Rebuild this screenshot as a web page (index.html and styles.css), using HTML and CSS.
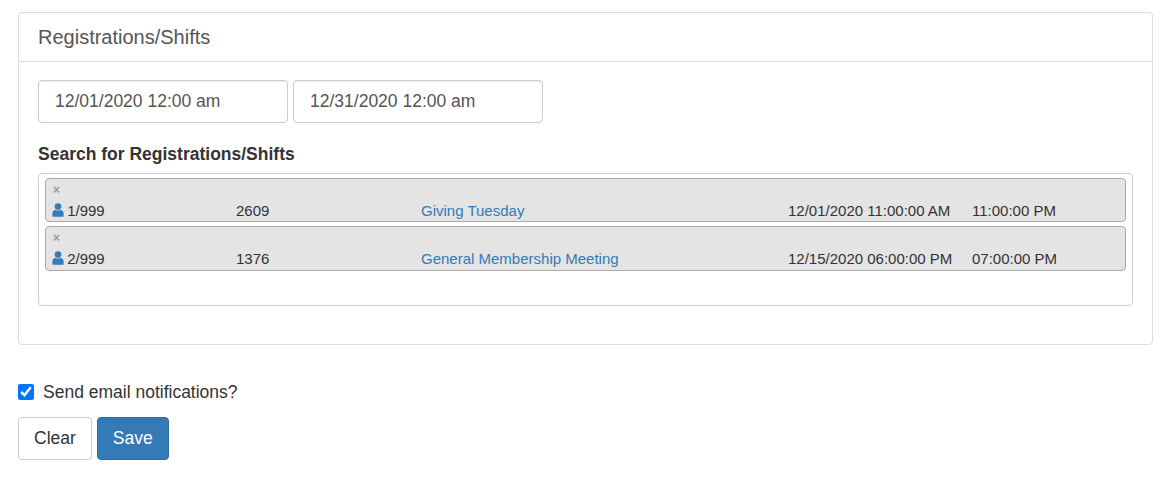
FILE: index.html
```html
<!DOCTYPE html>
<html lang="en">
<head>
    <meta charset="UTF-8">
    <title>Registrations/Shifts</title>
    <link rel="stylesheet" href="styles.css">
</head>
<body>
    <div class="panel">
        <div class="panel-heading">Registrations/Shifts</div>
        <div class="panel-body">
            <div class="date-range">
                <input class="form-control" type="text" value="12/01/2020 12:00 am">
                <input class="form-control" type="text" value="12/31/2020 12:00 am">
            </div>
            <label class="search-label">Search for Registrations/Shifts</label>
            <div class="select-box">
                <div class="choice">
                    <span class="choice-remove">×</span>
                    <div class="choice-row">
                        <span class="col-count">
                            <svg class="user-icon" viewBox="0 0 12 14"><circle cx="6" cy="3.6" r="3.3"/><path d="M0.4 13.2V10.4C0.4 8.2 2 7 3.6 6.7C4.2 7.3 5 7.6 6 7.6C7 7.6 7.8 7.3 8.4 6.7C10 7 11.6 8.2 11.6 10.4V13.2C11.6 13.6 11.3 13.8 11 13.8H1C0.7 13.8 0.4 13.6 0.4 13.2Z"/></svg>
                            1/999
                        </span>
                        <span class="col-id">2609</span>
                        <a class="col-name" href="#">Giving Tuesday</a>
                        <span class="col-start">12/01/2020 11:00:00 AM</span>
                        <span>11:00:00 PM</span>
                    </div>
                </div>
                <div class="choice">
                    <span class="choice-remove">×</span>
                    <div class="choice-row">
                        <span class="col-count">
                            <svg class="user-icon" viewBox="0 0 12 14"><circle cx="6" cy="3.6" r="3.3"/><path d="M0.4 13.2V10.4C0.4 8.2 2 7 3.6 6.7C4.2 7.3 5 7.6 6 7.6C7 7.6 7.8 7.3 8.4 6.7C10 7 11.6 8.2 11.6 10.4V13.2C11.6 13.6 11.3 13.8 11 13.8H1C0.7 13.8 0.4 13.6 0.4 13.2Z"/></svg>
                            2/999
                        </span>
                        <span class="col-id">1376</span>
                        <a class="col-name" href="#">General Membership Meeting</a>
                        <span class="col-start">12/15/2020 06:00:00 PM</span>
                        <span>07:00:00 PM</span>
                    </div>
                </div>
            </div>
        </div>
    </div>

    <label class="notify">
        <input type="checkbox" checked>
        Send email notifications?
    </label>

    <div class="actions">
        <button class="btn" type="button">Clear</button>
        <button class="btn btn-primary" type="button">Save</button>
    </div>
</body>
</html>
```

FILE: styles.css
```css
body {
    font-family: "Liberation Sans", Arial, sans-serif;
    font-size: 17.5px;
    color: #333;
    margin: 0;
    padding: 12px 16px 0 18px;
    background: white;
}

.panel {
    border: 1px solid #ddd;
    border-radius: 4px;
    margin-bottom: 35px;
}

.panel-heading {
    padding: 12px 19px 12px;
    height: 24px;
    line-height: 24px;
    font-size: 20px;
    color: #555;
    border-bottom: 1px solid #ddd;
}

.panel-body {
    padding: 18px 19px 38px;
}

.date-range {
    display: flex;
    gap: 5px;
    margin-bottom: 20px;
}

.form-control {
    width: 250px;
    height: 43px;
    box-sizing: border-box;
    padding: 0 16px;
    font-family: inherit;
    font-size: 17.5px;
    color: #555;
    border: 1px solid #ccc;
    border-radius: 4px;
    box-shadow: inset 0 1px 1px rgba(0,0,0,0.075);
}

.search-label {
    display: block;
    font-weight: bold;
    line-height: 22px;
    margin-bottom: 8px;
}

.select-box {
    height: 133px;
    box-sizing: border-box;
    padding: 4px 6px;
    border: 1px solid #ccc;
    border-radius: 4px;
}

.choice {
    background: #e4e4e4;
    border: 1px solid #aaa;
    border-radius: 4px;
    padding: 0 6px;
    height: 44px;
    box-sizing: border-box;
    margin-bottom: 4px;
    font-size: 15px;
}

.choice + .choice {
    height: 45px;
}

.choice-remove {
    display: block;
    color: #999;
    font-weight: bold;
    font-size: 12px;
    line-height: 13px;
    padding: 5px 0 0 1px;
}

.choice-row {
    display: flex;
    line-height: 20px;
    margin-top: 4px;
}

.col-count {
    width: 184px;
}

.col-id {
    width: 185px;
}

.col-name {
    width: 367px;
    color: #337ab7;
    text-decoration: none;
}

.col-start {
    width: 184px;
}

.user-icon {
    width: 12px;
    height: 14px;
    margin-right: -1px;
    fill: #337ab7;
    vertical-align: -1px;
}

.notify {
    display: flex;
    align-items: center;
    gap: 9px;
    line-height: 24px;
    margin-bottom: 13px;
}

.notify input {
    width: 16px;
    height: 16px;
    margin: 0;
}

.actions {
    display: flex;
    gap: 5px;
}

.btn {
    height: 43px;
    padding: 0 15px;
    font-family: inherit;
    font-size: 17.5px;
    color: #333;
    background: white;
    border: 1px solid #ccc;
    border-radius: 4px;
}

.btn-primary {
    color: white;
    background: #337ab7;
    border-color: #2e6da4;
}
```
